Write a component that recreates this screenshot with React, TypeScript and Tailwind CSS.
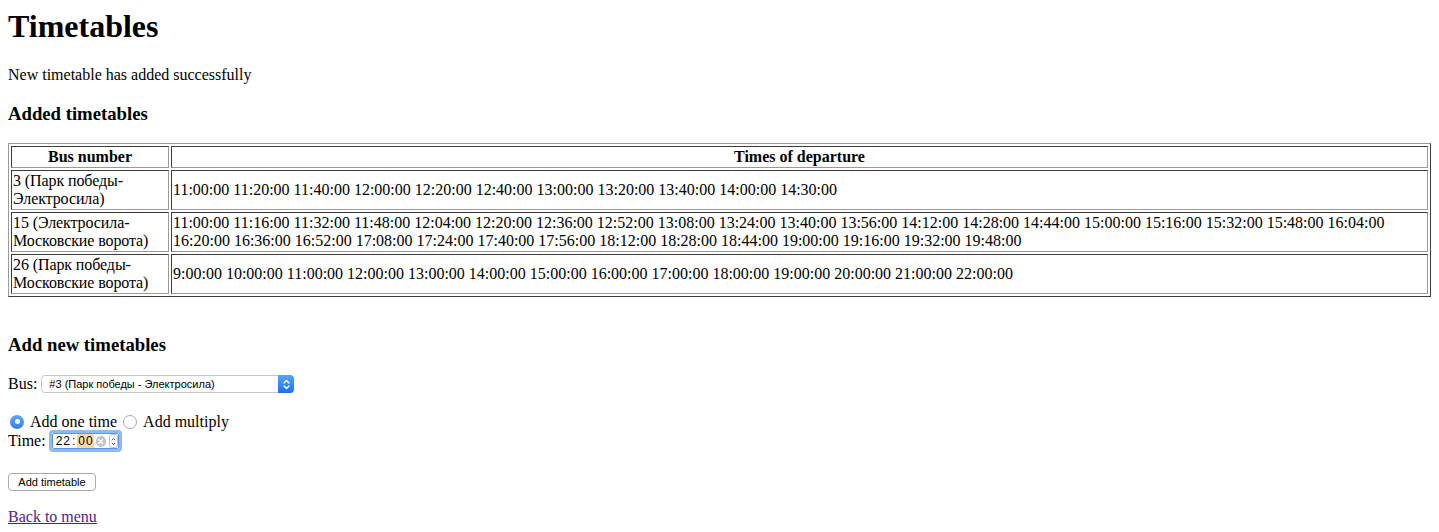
import React from "react";

interface TimetableRow {
  bus: string;
  times: string[];
}

const rows: TimetableRow[] = [
  {
    bus: "3 (Парк победы-Электросила)",
    times: ["11:00:00", "11:20:00", "11:40:00", "12:00:00", "12:20:00", "12:40:00", "13:00:00", "13:20:00", "13:40:00", "14:00:00", "14:30:00"],
  },
  {
    bus: "15 (Электросила-Московские ворота)",
    times: [
      "11:00:00", "11:16:00", "11:32:00", "11:48:00", "12:04:00", "12:20:00", "12:36:00", "12:52:00", "13:08:00", "13:24:00",
      "13:40:00", "13:56:00", "14:12:00", "14:28:00", "14:44:00", "15:00:00", "15:16:00", "15:32:00", "15:48:00", "16:04:00",
      "16:20:00", "16:36:00", "16:52:00", "17:08:00", "17:24:00", "17:40:00", "17:56:00", "18:12:00", "18:28:00", "18:44:00",
      "19:00:00", "19:16:00", "19:32:00", "19:48:00",
    ],
  },
  {
    bus: "26 (Парк победы-Московские ворота)",
    times: ["9:00:00", "10:00:00", "11:00:00", "12:00:00", "13:00:00", "14:00:00", "15:00:00", "16:00:00", "17:00:00", "18:00:00", "19:00:00", "20:00:00", "21:00:00", "22:00:00"],
  },
];

const cell = "border border-t-[#3c3c3c] border-l-[#3c3c3c] border-r-[#9a9a9a] border-b-[#9a9a9a] p-px align-middle";

function Chevrons({ color }: { color: string }) {
  return (
    <svg width="7" height="11" viewBox="0 0 7 11" fill="none" stroke={color} strokeWidth="1.3" strokeLinecap="round" strokeLinejoin="round">
      <path d="M1 4 L3.5 1.5 L6 4" />
      <path d="M1 7 L3.5 9.5 L6 7" />
    </svg>
  );
}

export default function App() {
  return (
    <div className="px-2 pt-2 pb-2 font-['Liberation_Serif',serif] text-[16px] leading-[normal] text-black bg-white min-h-[532px]">
      <h1 className="text-[32px] font-bold leading-[normal] mb-[21.44px]">Timetables</h1>
      <p>New timetable has added successfully</p>
      <h3 className="text-[18.72px] font-bold leading-[normal] my-[18.72px]">Added timetables</h3>

      <table className="w-full table-fixed border-separate border-spacing-[2px] border border-t-[#9a9a9a] border-l-[#9a9a9a] border-r-[#3c3c3c] border-b-[#3c3c3c] -mt-px">
        <thead>
          <tr>
            <th className={`${cell} w-[158px] text-center font-bold`}>Bus number</th>
            <th className={`${cell} text-center font-bold`}>Times of departure</th>
          </tr>
        </thead>
        <tbody>
          {rows.map((row) => (
            <tr key={row.bus}>
              <td className={`${cell} text-left tracking-[-0.1px] whitespace-normal`}>{row.bus}</td>
              <td className={`${cell} text-left`}>{row.times.join(" ")}</td>
            </tr>
          ))}
        </tbody>
      </table>

      <h3 className="text-[18.72px] font-bold leading-[normal] mt-[37px] mb-[18.72px]">Add new timetables</h3>

      <div className="flex items-center h-[19px]">
        <span>Bus:</span>
        <div className="ml-[4px] flex h-[18px] w-[253px] items-stretch rounded-[4px] border border-[#c6c6c6] bg-white font-['Liberation_Sans',sans-serif] text-[11px]">
          <span className="flex-1 flex items-center pl-[7px] text-black">#3 (Парк победы - Электросила)</span>
          <span className="flex w-[16px] items-center justify-center rounded-r-[4px] bg-gradient-to-b from-[#5aa4fb] to-[#1c6ff0] -my-px -mr-px">
            <Chevrons color="#ffffff" />
          </span>
        </div>
      </div>

      <div className="mt-[19px] flex items-center h-[18px]">
        <span className="ml-[2px] mr-[6px] flex h-[14px] w-[14px] items-center justify-center rounded-full bg-gradient-to-b from-[#5ca6fa] to-[#2f82f2]">
          <span className="h-[5px] w-[5px] rounded-full bg-white" />
        </span>
        <span>Add one time</span>
        <span className="ml-[6px] mr-[6px] h-[14px] w-[14px] rounded-full border border-[#a8a8a8] bg-white" />
        <span>Add multiply</span>
      </div>

      <div className="flex items-center h-[21px]">
        <span>Time:</span>
        <div className="ml-[3px] flex h-[22px] w-[73px] items-center rounded-[4px] border-[3px] border-[#8fb9f3] bg-white">
          <div className="flex h-full w-full items-center rounded-[2px] border border-[#5b95ea] pl-[3px] font-['Liberation_Sans',sans-serif] text-[12px] tracking-[1px]">
            <span>22</span>
            <span className="mx-px">:</span>
            <span className="bg-[#fdd8a9] pl-px leading-[14px]">00</span>
            <span className="ml-[2px] flex h-[11px] w-[11px] items-center justify-center rounded-full bg-[#c4c4c4]">
              <svg width="5" height="5" viewBox="0 0 5 5" stroke="#ffffff" strokeWidth="1.2" strokeLinecap="round">
                <path d="M0.5 0.5 L4.5 4.5 M4.5 0.5 L0.5 4.5" />
              </svg>
            </span>
            <span className="ml-[3px] flex h-[14px] w-[9px] items-center justify-center rounded-[3px] border border-[#c4c4c4]">
              <svg width="5" height="9" viewBox="0 0 5 9" fill="none" stroke="#555555" strokeWidth="0.9" strokeLinecap="round" strokeLinejoin="round">
                <path d="M1 3 L2.5 1.5 L4 3" />
                <path d="M1 6 L2.5 7.5 L4 6" />
              </svg>
            </span>
          </div>
        </div>
      </div>

      <div className="mt-[20px]">
        <button className="h-[18px] w-[88px] rounded-[4px] border border-[#a9a9a9] bg-white font-['Liberation_Sans',sans-serif] text-[11px] text-black leading-none">
          Add timetable
        </button>
      </div>

      <div className="mt-[17px]">
        <a href="#" className="text-[#551a8b] underline">Back to menu</a>
      </div>
    </div>
  );
}
